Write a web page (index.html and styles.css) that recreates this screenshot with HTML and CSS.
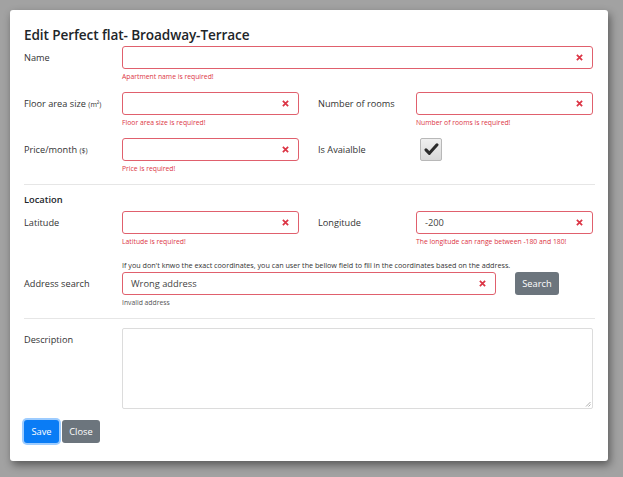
FILE: index.html
```html
<!DOCTYPE html>
<html>
<head>
<meta charset="utf-8">
<link rel="stylesheet" href="styles.css">
</head>
<body>
<div class="modal">
  <h1 class="title">Edit Perfect flat- Broadway-Terrace</h1>

  <div class="row row-single">
    <label class="label">Name</label>
    <div class="field wide">
      <div class="input invalid"><span class="value"></span><svg class="x" viewBox="0 0 8 8"><path d="M1 1L7 7M7 1L1 7"/></svg></div>
      <div class="feedback">Apartment name is required!</div>
    </div>
  </div>

  <div class="row">
    <div class="half">
      <label class="label">Floor area size <small>(m²)</small></label>
      <div class="field">
        <div class="input invalid"><span class="value"></span><svg class="x" viewBox="0 0 8 8"><path d="M1 1L7 7M7 1L1 7"/></svg></div>
        <div class="feedback">Floor area size is required!</div>
      </div>
    </div>
    <div class="half">
      <label class="label">Number of rooms</label>
      <div class="field">
        <div class="input invalid"><span class="value"></span><svg class="x" viewBox="0 0 8 8"><path d="M1 1L7 7M7 1L1 7"/></svg></div>
        <div class="feedback">Number of rooms is required!</div>
      </div>
    </div>
  </div>

  <div class="row">
    <div class="half">
      <label class="label">Price/month <small>($)</small></label>
      <div class="field">
        <div class="input invalid"><span class="value"></span><svg class="x" viewBox="0 0 8 8"><path d="M1 1L7 7M7 1L1 7"/></svg></div>
        <div class="feedback">Price is required!</div>
      </div>
    </div>
    <div class="half">
      <label class="label">Is Avaialble</label>
      <div class="field">
        <div class="checkbox"><svg viewBox="0 0 20 20"><path d="M3.5 10.5L7.5 14.5L16.5 4.5" /></svg></div>
      </div>
    </div>
  </div>

  <hr class="sep sep-a">

  <div class="section">Location</div>

  <div class="row row-lat">
    <div class="half">
      <label class="label">Latitude</label>
      <div class="field">
        <div class="input invalid"><span class="value"></span><svg class="x" viewBox="0 0 8 8"><path d="M1 1L7 7M7 1L1 7"/></svg></div>
        <div class="feedback">Latitude is required!</div>
      </div>
    </div>
    <div class="half">
      <label class="label">Longitude</label>
      <div class="field">
        <div class="input invalid"><span class="value">-200</span><svg class="x" viewBox="0 0 8 8"><path d="M1 1L7 7M7 1L1 7"/></svg></div>
        <div class="feedback">The longitude can range between -180 and 180!</div>
      </div>
    </div>
  </div>

  <div class="help">If you don't knwo the exact coordinates, you can user the bellow field to fill in the coordinates based on the address.</div>

  <div class="row row-single row-addr">
    <label class="label">Address search</label>
    <div class="field addr">
      <div class="input invalid"><span class="value">Wrong address</span><svg class="x" viewBox="0 0 8 8"><path d="M1 1L7 7M7 1L1 7"/></svg></div>
      <div class="feedback muted">Invalid address</div>
    </div>
    <button class="btn btn-gray search">Search</button>
  </div>

  <hr class="sep sep-b">

  <div class="row row-single row-desc">
    <label class="label">Description</label>
    <div class="textarea"><svg class="grip" viewBox="0 0 6 6"><path d="M5.5 1L1 5.5M5.5 3.5L3.5 5.5"/></svg></div>
  </div>

  <div class="actions">
    <button class="btn btn-blue">Save</button>
    <button class="btn btn-gray">Close</button>
  </div>
</div>
</body>
</html>
```

FILE: styles.css
```css
* { box-sizing: border-box; }
html, body { margin: 0; }
body {
  width: 623px;
  height: 477px;
  background: #a2a2a2;
  padding: 10px;
  font-family: "Open Sans", "Noto Sans", sans-serif;
  color: #333;
  overflow: hidden;
}
.modal {
  width: 598px;
  height: 451px;
  background: #fff;
  border-radius: 3px;
  box-shadow: 2px 4px 8px rgba(0,0,0,0.45);
  padding: 14px 15px 0 14px;
}
.title {
  margin: 0 0 1px;
  font-size: 13.6px;
  line-height: 21px;
  font-weight: 600;
  color: #212529;
  letter-spacing: -0.1px;
}
.row {
  display: flex;
  gap: 19px;
  margin-bottom: 10px;
}
.row-single { gap: 0; }
.half {
  display: flex;
}
.label {
  width: 98px;
  flex: none;
  font-size: 9.2px;
  line-height: 23px;
  color: #333;
}
.label small { font-size: 7px; }
.field { width: 177px; }
.field.wide { width: 471px; }
.field.addr { width: 374px; }
.input {
  height: 23px;
  border: 1px solid #e0606d;
  border-radius: 3px;
  display: flex;
  align-items: center;
  padding: 0 9px 0 8px;
  background: #fff;
}
.value {
  flex: 1;
  font-size: 9.3px;
  color: #444;
}
.x {
  width: 7px;
  height: 7px;
  flex: none;
}
.x path {
  stroke: #dc3545;
  stroke-width: 2;
  fill: none;
}
.feedback {
  margin-top: 3px;
  font-size: 6.8px;
  line-height: 10px;
  color: #dc3545;
}
.feedback.muted { color: #555; }
.checkbox {
  width: 22px;
  height: 23px;
  margin-left: 4px;
  border: 1px solid #b8b8b8;
  border-radius: 2px;
  background: linear-gradient(#f0f0f0, #d8d8d8);
  display: flex;
  align-items: center;
  justify-content: center;
}
.checkbox svg { width: 17px; height: 17px; }
.checkbox path {
  fill: none;
  stroke: #2b2b2b;
  stroke-width: 3.6;
  stroke-linecap: round;
  stroke-linejoin: round;
}
.sep {
  border: 0;
  border-top: 1px solid #e6e6e6;
  margin: 0;
  width: 571px;
}
.section {
  margin-top: 8px;
  font-size: 9.3px;
  line-height: 14px;
  font-weight: 600;
  color: #212529;
}
.row-lat { margin-top: 4px; margin-bottom: 13px; }
.help {
  margin-left: 98px;
  font-size: 7.2px;
  line-height: 10px;
  color: #333;
}
.row-addr { margin-top: 2px; margin-bottom: 10px; }
.btn {
  height: 23px;
  border: 0;
  border-radius: 3px;
  font-family: inherit;
  font-size: 9.3px;
  color: #fff;
  padding: 0 6px;
  cursor: pointer;
}
.btn-gray { background: #6c757d; }
.btn-blue {
  background: #0a7cf5;
  box-shadow: 0 0 0 2px rgba(38,143,255,0.45);
}
.search { width: 44px; padding: 0; margin-left: 19px; }
.sep-b { margin-bottom: 9px; }
.row-desc { margin-bottom: 11px; }
.textarea {
  width: 471px;
  height: 81px;
  border: 1px solid #dcdcdc;
  border-radius: 2px;
  position: relative;
}
.grip {
  position: absolute;
  right: 1px;
  bottom: 1px;
  width: 6px;
  height: 6px;
}
.grip path { stroke: #999; stroke-width: 0.8; fill: none; }
.actions {
  display: flex;
  gap: 3px;
}
.actions .btn-blue { width: 35px; padding: 0; }
.actions .btn-gray { width: 38px; padding: 0; }
```
